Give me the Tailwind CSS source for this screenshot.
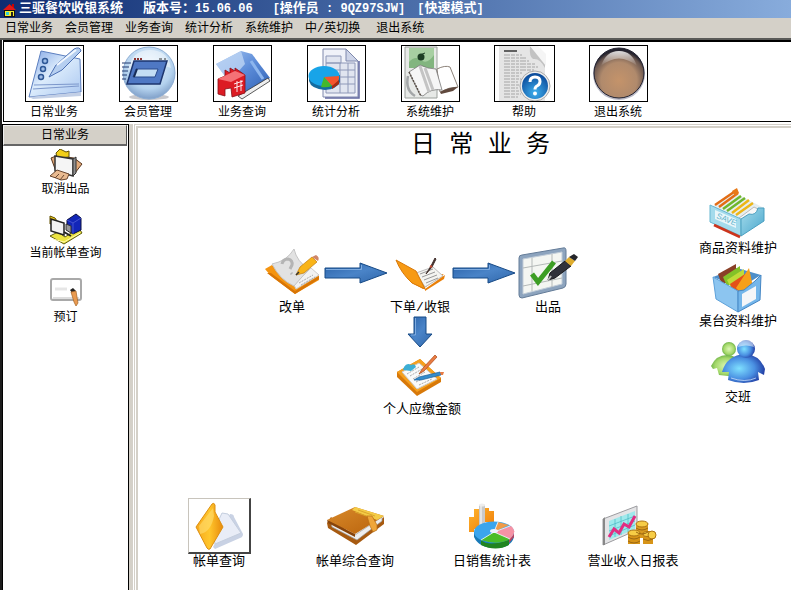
<!DOCTYPE html>
<html lang="zh-CN">
<head>
  <meta charset="UTF-8">
  <title>三驱餐饮收银系统</title>
  <script src="https://cdn.jsdelivr.net/npm/@tailwindcss/browser@4"></script>
</head>
<body class="min-h-screen flex flex-col bg-white text-black text-xs leading-4 font-['Liberation_Mono','Noto_Sans_CJK_SC',monospace] pb-[15px]">

  <!-- Shared gradients -->
  <svg class="absolute" width="0" height="0" aria-hidden="true">
    <defs>
      <linearGradient id="paleBlue" x1="0" y1="0" x2="1" y2="1"><stop offset="0" stop-color="#7fa3e4"/><stop offset=".45" stop-color="#dcecfc"/><stop offset="1" stop-color="#a9c6f0"/></linearGradient>
      <linearGradient id="blue" x1="0" y1="0" x2="1" y2="1"><stop offset="0" stop-color="#a9c8f2"/><stop offset=".5" stop-color="#5b8bd8"/><stop offset="1" stop-color="#2a5cb0"/></linearGradient>
      <linearGradient id="arrow" x1="0" y1="0" x2="1" y2="1"><stop offset="0" stop-color="#2a62a8"/><stop offset=".5" stop-color="#4a84c8"/><stop offset="1" stop-color="#2f66aa"/></linearGradient>
      <linearGradient id="gray" x1="0" y1="0" x2="1" y2="1"><stop offset="0" stop-color="#fafafa"/><stop offset="1" stop-color="#c4c6c8"/></linearGradient>
      <linearGradient id="orange" x1="0" y1="0" x2="1" y2="1"><stop offset="0" stop-color="#ffb52e"/><stop offset="1" stop-color="#ee7a06"/></linearGradient>
      <linearGradient id="gold" x1="0" y1="0" x2="1" y2="0"><stop offset="0" stop-color="#f7a81c"/><stop offset=".5" stop-color="#ffc62c"/><stop offset="1" stop-color="#e88a0c"/></linearGradient>
      <linearGradient id="brown" x1="0" y1="0" x2="1" y2="1"><stop offset="0" stop-color="#d98a2a"/><stop offset="1" stop-color="#b8620c"/></linearGradient>
      <linearGradient id="cyan" x1="0" y1="0" x2="1" y2="1"><stop offset="0" stop-color="#a6dcec"/><stop offset="1" stop-color="#48a6cc"/></linearGradient>
      <radialGradient id="sphere" cx=".5" cy=".35" r=".65"><stop offset="0" stop-color="#eef7fe"/><stop offset=".7" stop-color="#b4d2ee"/><stop offset="1" stop-color="#7f9fc8"/></radialGradient>
      <radialGradient id="bronze" cx=".5" cy=".65" r=".6"><stop offset="0" stop-color="#c4936a"/><stop offset=".6" stop-color="#b08a6c"/><stop offset=".88" stop-color="#6c5850"/><stop offset="1" stop-color="#23222e"/></radialGradient>
      <linearGradient id="gloss" x1="0" y1="0" x2="0" y2="1"><stop offset="0" stop-color="#fff" stop-opacity=".85"/><stop offset="1" stop-color="#fff" stop-opacity="0"/></linearGradient>
      <radialGradient id="help" cx=".5" cy=".75" r=".7"><stop offset="0" stop-color="#3fb0ee"/><stop offset="1" stop-color="#0c4c9c"/></radialGradient>
      <radialGradient id="bluePerson" cx=".4" cy=".5" r=".65"><stop offset="0" stop-color="#7fe0ff"/><stop offset=".55" stop-color="#4a90e2"/><stop offset="1" stop-color="#1a2e98"/></radialGradient>
      <radialGradient id="greenPerson" cx=".5" cy=".5" r=".6"><stop offset="0" stop-color="#dcf7b4"/><stop offset=".6" stop-color="#a4d86a"/><stop offset="1" stop-color="#4c9a34"/></radialGradient>
    </defs>
  </svg>

  <!-- Title bar -->
  <header class="flex items-center h-[18px] pl-[3px] bg-linear-to-r from-[#102c72] to-[#88acdc] text-white font-bold whitespace-pre">
    <svg class="mr-[3px] mt-0.5" width="13" height="14" viewBox="0 0 13 14">
      <path d="M1 7L6.500 1 12 7v7H1z" fill="#111"/>
      <path d="M9 1h2v4H9z" fill="#c00"/>
      <path d="M0 7L6.500 1 13 7H0z" fill="#e01818"/>
      <path d="M2 8h9v5H2z" fill="#f4ee30"/>
      <path d="M3 9h3v3H3z" fill="#2cd0d8"/><path d="M8 9h2v4H8z" fill="#222"/>
    </svg>
    <h1 class="text-[13px]">三驱餐饮收银系统</h1>
    <span class="ml-5 text-[13px]">版本号：</span><span>15.06.06</span>
    <span class="ml-5">[</span><span class="text-[13px]">操作员</span><span> : 9QZ97SJW]</span>
    <span class="ml-3">[</span><span class="text-[13px]">快速模式</span><span>]</span>
  </header>

  <!-- Menu -->
  <nav class="flex items-center gap-3 h-[22px] pt-0.5 pl-[5px] bg-[#d4d0c8] border-b-2 border-[#5a5a58]">
    <button>日常业务</button>
    <button>会员管理</button>
    <button>业务查询</button>
    <button>统计分析</button>
    <button>系统维护</button>
    <button>中/英切换</button>
    <button class="ml-1">退出系统</button>
  </nav>

  <div class="flex-1 flex flex-col border-l-2 border-[#1c1c1c]">

    <!-- Toolbar -->
    <div class="flex ml-px pl-[3px] pt-[3px] border-l border-t-2 border-b border-black">
      <button class="w-[94px] flex flex-col items-center gap-[3px]">
        <svg class="border border-black" width="59" height="57" viewBox="0 0 57 55">
          <path d="M15 5L54 13 55 46 3 51z" fill="url(#paleBlue)" stroke="#5c7fc0"/>
          <path d="M7 43l46-3M8 39l45-1" stroke="#7d98cc" fill="none"/>
          <path d="M3 51l52-5v4L7 53z" fill="#c2cfe6"/>
          <g fill="#9fbde8" stroke="#2e5796" stroke-width="1.500"><circle cx="19" cy="15" r="2.500"/><circle cx="17" cy="23" r="2.500"/><circle cx="15" cy="31" r="2.500"/></g>
          <path d="M23 31l7-12L48 3q6-3 7 2L36 24z" fill="#b6cff0" stroke="#4d70b4"/>
          <path d="M31 19L50 4" stroke="#f2f8ff" stroke-width="2"/>
        </svg>
        日常业务
      </button>
      <button class="w-[94px] flex flex-col items-center gap-[3px]">
        <svg class="border border-black" width="59" height="57" viewBox="0 0 57 55">
          <ellipse cx="29" cy="51" rx="20" ry="3" fill="#c8c8cc"/>
          <circle cx="29" cy="27" r="26" fill="url(#sphere)" stroke="#8eaed4"/>
          <path d="M8 24q4-20 22-20t21 18q-20-8-43 2z" fill="#fff" opacity=".45"/>
          <path d="M14 15h33L40 38H7z" fill="#4f78c4" stroke="#1d356e" stroke-width="1.500"/>
          <path d="M16 23h22l-3 8H13z" fill="#c4ddf4" stroke="#2b4a8c"/>
          <path d="M17 23l-3 8" stroke="#152a55" stroke-width="2"/>
          <path d="M14 13h9" stroke="#883232" stroke-width="2" stroke-dasharray="2 1"/><path d="M39 13h7" stroke="#333" stroke-dasharray="3 2"/>
          <path d="M2 17h9M2 21h7M2 25h6M2 29h5M2 33h4" stroke="#223a70"/>
        </svg>
        会员管理
      </button>
      <button class="w-[94px] flex flex-col items-center gap-[3px]">
        <svg class="border border-black" width="59" height="57" viewBox="0 0 57 55">
          <path d="M2 18L27 5l11 3 18 24-30 18z" fill="url(#blue)"/>
          <path d="M2 18L27 5l4 13-16 18z" fill="#bdd5f4" opacity=".8"/>
          <path d="M24 50L54 32l2 3-28 18z" fill="#eee" stroke="#333" stroke-width=".8"/>
          <path d="M37 15l12 18" stroke="#8db6ee" stroke-width="3"/>
          <path d="M4 33l7-3v-6l5 3v-5l5 3v-3l10 7v18l-13 4-1-9-6 1v7l-7-2z" fill="#dc1c24" stroke="#861016" stroke-width=".8"/>
          <path d="M4 33l13 3 14-7-10-4z" fill="#f47276"/>
          <path d="M20 38l9-3M20 42l9-3M23 35v11M27 34v11" stroke="#fff" stroke-width=".9"/>
        </svg>
        业务查询
      </button>
      <button class="w-[94px] flex flex-col items-center gap-[3px]">
        <svg class="border border-black" width="59" height="57" viewBox="0 0 57 55">
          <path d="M15 3h23l12 12v36H15z" fill="#f0f2f9" stroke="#7e88ac"/>
          <path d="M51 15v37H17" stroke="#6268a0" stroke-width="1.500" fill="none"/>
          <path d="M38 3v12h12z" fill="#cdd4e8" stroke="#7e88ac"/>
          <path d="M18 10h15v7H18zM18 17h29v30H18z" fill="#e1e5f0" stroke="#8e98b8"/>
          <path d="M18 24h29M18 31h29M18 38h29M32 17v30M40 17v30" stroke="#8e98b8" fill="none"/>
          <path d="M1 29v6q2 8 16 9 12-1 15-8v-7z" fill="#146ca0"/>
          <ellipse cx="16" cy="30" rx="15.500" ry="10" fill="#18a4e8"/>
          <path d="M16 31l15-1q1 6-7 10z" fill="#f4552c"/><path d="M24 40l7-6v4l-7 5z" fill="#a82c12"/>
          <path d="M16 31l8 9q-5 2-11 1z" fill="#42b82c"/>
        </svg>
        统计分析
      </button>
      <button class="w-[94px] flex flex-col items-center gap-[3px]">
        <svg class="border border-black" width="59" height="57" viewBox="0 0 57 55">
          <path d="M3 1h32v51H3z" fill="#e7e9e7" stroke="#9ba09c"/>
          <path d="M7 2h25v20H7z" fill="#a7cfa2"/><path d="M7 16q6-7 12-2t13-5v13H7z" fill="#82b57f"/>
          <circle cx="19" cy="11" r="3.500" fill="#1c3e24"/><path d="M18 9l5-2" stroke="#1c3e24"/>
          <path d="M6 30q-3 14 7 20" fill="none" stroke="#a3a6a8" stroke-width="2.500"/>
          <path d="M35 23q8-4 13-2l8 20q-9 0-18 5z" fill="#fff" stroke="#8c8279"/>
          <path d="M38 46q9-5 18-5l-5 4-12 3z" fill="#60493e"/>
          <path d="M7 26l11-7q8 4 16 4l6 21q-11-2-19 6l-3-1z" fill="#f6f6f6" stroke="#777" stroke-width=".8"/>
          <path d="M7 26l12 24" stroke="#5a5048" stroke-width="1.500" stroke-dasharray="2 1"/>
          <path d="M18 20l9 26M23 22l8 22" stroke="#c4c4c4" stroke-width="3"/>
        </svg>
        系统维护
      </button>
      <button class="w-[94px] flex flex-col items-center gap-[3px]">
        <svg class="border border-black" width="61" height="57" viewBox="0 0 59 55">
          <path d="M4 0h31l15 14v41H4z" fill="#e5e5e5"/>
          <path d="M35 0q-1 11 3 13 7-1 12 9V14z" fill="#c2c2c2"/><path d="M35 0l16 20V8L43 0z" fill="#f5f5f5"/>
          <path d="M9 5h13" stroke="#333" stroke-width="1.500"/>
          <path d="M9 9h18M9 12h22M9 15h25M9 18h32M9 21h34M9 24h30M9 27h18M9 30h15M9 33h17M9 36h14M9 39h16M9 42h14M9 45h16M9 48h17M9 51h14" stroke="#a5a5a5" stroke-dasharray="6 1 4 1 3 1"/>
          <circle cx="40" cy="40" r="15" fill="#eee" stroke="#aaa"/>
          <circle cx="40" cy="40" r="13" fill="url(#help)"/>
          <path d="M35 36q0-5 5-5t5 4.500q0 3-3 4.500-2 1-2 3.500" fill="none" stroke="#fff" stroke-width="3"/><circle cx="40" cy="47.500" r="2" fill="#fff"/>
        </svg>
        帮助
      </button>
      <button class="w-[94px] flex flex-col items-center gap-[3px]">
        <svg class="border border-black" width="59" height="57" viewBox="0 0 57 55">
          <circle cx="29" cy="28" r="26" fill="#b9b9c6"/>
          <circle cx="29" cy="27" r="25" fill="url(#bronze)" stroke="#222230"/>
          <path d="M11 20Q16 5 29 5t18 15Q29 5 11 20z" fill="url(#gloss)"/>
        </svg>
        退出系统
      </button>
    </div>

    <div class="flex-1 flex mt-0.5">

      <!-- Sidebar -->
      <aside class="w-[127px] shrink-0 flex flex-col border-t border-x border-black">
        <button class="h-[21px] mr-px mb-[3px] pt-px bg-[#d4d0c8] border border-b-2 border-t-[#eee] border-l-[#eee] border-r-[#555] border-b-[#666]">日常业务</button>
        <button class="h-16 flex flex-col items-center gap-px">
          <svg width="34" height="32" viewBox="0 0 34 32">
            <path d="M2 9l5-2 18 2 8 6-7 9-18 1z" fill="#e0a878" stroke="#58351e"/>
            <path d="M7 4l4-4 6 3 3-1v6L8 9z" fill="#f2cf18" stroke="#635000"/>
            <path d="M6 7l18 3v17L6 22z" fill="#f5f5f5" stroke="#333" stroke-width="1.500"/>
            <path d="M24 10l3-2v16l-3 3z" fill="#8e8e8e" stroke="#333"/>
            <path d="M1 27l7-6 12 4-2 5-6 1-5-2z" fill="#e9ba90" stroke="#69462f"/>
            <path d="M6 29l4-4M11 31l4-5" stroke="#69462f"/>
          </svg>
          取消出品
        </button>
        <button class="h-16 flex flex-col items-center gap-px">
          <svg width="34" height="32" viewBox="0 0 34 32">
            <path d="M1 23l8-4 7 5 14-9 3 5-18 11z" fill="#ece442" stroke="#5f5a10"/>
            <path d="M4 26l11 3 16-9" stroke="#fff9b0" fill="none"/>
            <path d="M1 3l5 2 2 3-7 3z" fill="#f2cf18" stroke="#635000"/>
            <path d="M2 6l13 4v12L2 18z" fill="#f3f3f3" stroke="#222" stroke-width="1.500"/>
            <path d="M18 7l9-6 5 4v12l-8 4-6-4z" fill="#1226b8" stroke="#0a0f40"/>
            <path d="M18 7l6 3 8-5M24 10v11" stroke="#4253d0" fill="none"/><path d="M17 11l5 2v7l-5-3z" fill="#999" stroke="#333"/>
            <path d="M15 19l7 4" stroke="#222" stroke-width="2"/>
          </svg>
          当前帐单查询
        </button>
        <button class="h-16 flex flex-col items-center gap-px">
          <svg width="34" height="32" viewBox="0 0 34 32">
            <rect x="2" y="2" width="30" height="21" rx="2" fill="#fff" stroke="#a9a9a9" stroke-width="2"/>
            <path d="M4 21h26" stroke="#ddd" stroke-width="2"/><path d="M6 12h12" stroke="#e6e6e6" stroke-width="3"/>
            <path d="M21 13l3-2 3 3-4 2z" fill="#222"/>
            <path d="M22 15l5-1 2 12-2 3-2-4z" fill="#e99a50" stroke="#a26326" stroke-width=".7"/>
          </svg>
          预订
        </button>
      </aside>

      <div class="w-1 shrink-0 bg-[#d4d0c8]"></div>

      <!-- Main area -->
      <div class="flex-1 flex ml-px pl-px pt-px border-l border-t border-[#d4d0c8]">
        <main class="flex-1 flex flex-col border-l-2 border-t-2 border-[#d4d0c8] text-[13px]">
          <h2 class="pl-8 text-center text-2xl leading-9 font-normal">日 常 业 务</h2>

          <div class="flex justify-between">
            <!-- Workflow -->
            <section class="grid grid-cols-[repeat(5,64px)] ml-[122px] pt-[81px] content-start">
              <button class="flex flex-col items-center gap-px whitespace-nowrap">
                <svg width="58" height="54" viewBox="0 0 58 54">
                  <path d="M2 24l7-4 25 20 20-11 2 1v5L32 49 8 31z" fill="#f49410"/>
                  <path d="M4 28l28 21 24-15v-3L32 46 8 28z" fill="#d87506"/>
                  <path d="M31 40L48 23l8 7-23 14z" fill="#f2f2f2" stroke="#ccc"/>
                  <path d="M9 19Q24 16 31 4q3 13 15 20L31 41Q17 35 9 19z" fill="#e2e2e2" stroke="#c4c4c4"/>
                  <path d="M19 19q1-5 6-5 5 1 4 6l-2 4M28 28l1 1" stroke="#b4b4b4" stroke-width="3" fill="none"/>
                  <path d="M36 38l14-8M38 40l14-8" stroke="#aaa" stroke-dasharray="2 1"/>
                  <path d="M33 30l4-8 12-10 5 5-13 11z" fill="#f9b418" stroke="#c07b0e" stroke-width=".7"/>
                  <path d="M49 12l4-2q4 2 2 6z" fill="#cf8669"/><path d="M33 30l3-3" stroke="#333" stroke-width="1.500"/>
                </svg>
                改单
              </button>
              <svg class="mt-[17px]" width="64" height="22" viewBox="0 0 64 22">
                <path d="M1 6h35V1l27 10-27 10v-5H1z" fill="url(#arrow)" stroke="#174a86"/>
                <path d="M2 7.500h35.500V3" stroke="#7eabdf" fill="none"/>
              </svg>
              <button class="flex flex-col items-center gap-px whitespace-nowrap">
                <svg width="58" height="54" viewBox="0 0 58 54">
                  <path d="M5 15l23 16 25-2-21 15L21 38z" fill="url(#orange)"/>
                  <path d="M25 28l17-6 10 9-18 11z" fill="#f4f4f0" stroke="#bbb"/>
                  <path d="M29 29l13-5M31 32l13-5M33 35l13-5M35 38l12-5" stroke="#999"/>
                  <path d="M5 15l20 11 9 18-13-6Q10 28 5 15z" fill="#f79a14" stroke="#d8790a"/>
                  <path d="M34 44l17-12 3-2-1 4-19 12z" fill="#e97f08"/>
                  <path d="M35 29l5-8 4-8 1 1-4 8z" fill="#42302c" stroke="#42302c"/><path d="M39 21l2 1" stroke="#cb4d34" stroke-width="2"/>
                </svg>
                下单/收银
              </button>
              <svg class="mt-[17px]" width="64" height="22" viewBox="0 0 64 22">
                <path d="M1 6h35V1l27 10-27 10v-5H1z" fill="url(#arrow)" stroke="#174a86"/>
                <path d="M2 7.500h35.500V3" stroke="#7eabdf" fill="none"/>
              </svg>
              <button class="flex flex-col items-center gap-px whitespace-nowrap">
                <svg width="60" height="54" viewBox="0 0 60 54">
                  <path d="M1 13q0-3 3-3L45 3q3-1 3 3v33q0 3-3 4L4 53q-3 0-3-3z" fill="#8da4be" stroke="#647c98"/>
                  <path d="M5 14l39-7v32L5 49z" fill="#f4f6f2" stroke="#c2cdd8"/>
                  <path d="M5 23l39-7M5 41l39-8M14 13v33M34 9v33" stroke="#b4b9b8"/>
                  <path d="M14 29l6 8 16-20" fill="none" stroke="#3d9e24" stroke-width="5"/>
                  <path d="M30 35l2-7 15-12 6 5-16 12z" fill="#30323a" stroke="#17171b"/>
                  <path d="M47 16l4-4 6 4-4 5z" fill="#deac2d"/><path d="M51 12l5-3 4 3-3 4z" fill="#24252a"/>
                  <path d="M30 35l3-4" stroke="#bbb" stroke-width="2"/>
                </svg>
                出品
              </button>

              <div class="col-start-3 flex flex-col items-center whitespace-nowrap">
                <svg width="26" height="32" viewBox="0 0 26 32">
                  <path d="M7 1h12v17h6L13 31 1 18h6z" fill="url(#arrow)" stroke="#174a86"/>
                  <path d="M8.500 2v17H4" stroke="#7eabdf" fill="none"/>
                </svg>
                <button class="mt-1 ml-1 flex flex-col items-center">
                  <svg width="52" height="50" viewBox="0 0 52 50">
                    <path d="M1 20L24 7l21 19v4L21 44 1 25z" fill="#d87909"/>
                    <path d="M1 20L24 7l21 19-24 14z" fill="#f6a01e"/>
                    <path d="M6 20L23 11l18 16-20 10z" fill="#fafafa" stroke="#ccc"/>
                    <path d="M11 22l12-7M14 24l12-7M17 27l12-7M20 30l14-7M23 33l13-6" stroke="#aaa" stroke-dasharray="2 1"/>
                    <path d="M8 15q3-5 7-2 4-2 5 2l-5 4-8-1z" fill="#3daed4"/>
                    <path d="M23 22l4-6 12-13 2 2-13 14z" fill="#e97b42" stroke="#a94816" stroke-width=".7"/>
                    <path d="M18 28l5-3 21-5 1 3-20 5z" fill="#348ccc" stroke="#1e5f99" stroke-width=".7"/><path d="M44 20l4 0-1 3-2 0z" fill="#e97b42"/>
                  </svg>
                  个人应缴金额
                </button>
              </div>
            </section>

            <!-- Maintenance -->
            <section class="flex flex-col items-center w-[106px] pt-6">
              <button class="flex flex-col items-center gap-px">
                <svg width="60" height="52" viewBox="0 0 60 52">
                  <path d="M5 18l20-14 31 16-27 20z" fill="#e6eef0"/>
                  <path d="M7 17L26 4M11 19L30 5" stroke="#e36d15" stroke-width="2.500"/><path d="M24 3l5-3 2 5-4 3z" fill="#e87918"/>
                  <path d="M15 21L33 8M19 23L37 10" stroke="#70b62c" stroke-width="2.500"/>
                  <path d="M24 25L41 12M28 27L45 15" stroke="#edb616" stroke-width="2.500"/>
                  <path d="M31 30l15-11 8 4-20 15z" fill="#f8f8f8" stroke="#bbb"/>
                  <path d="M2 17l31 14v17L2 34z" fill="#a4dbec" stroke="#67b6d0"/>
                  <path d="M33 31l8-5q7 2 9-6l6 0v13L33 48z" fill="url(#cyan)" stroke="#4a9fc0"/>
                  <path d="M7 22l21 9v9L7 31z" fill="#e9f6fa"/>
                  <text x="8" y="30" transform="rotate(22 8 30)" font-size="8" font-family="Liberation Sans" fill="#5fb4cc">SAVE</text>
                  <path d="M6 37l26 12" stroke="#cc341c" stroke-width="2.500"/>
                </svg>
                商品资料维护
              </button>
              <button class="mt-1.5 flex flex-col items-center gap-px">
                <svg width="54" height="50" viewBox="0 0 54 50">
                  <path d="M2 14l24-9 24 7-21 13z" fill="#4e8fca"/>
                  <path d="M7 11L25 1v13L11 22z" fill="#8a4028"/>
                  <path d="M12 14L29 3v14L16 23z" fill="#83c228"/><path d="M16 17L33 6v14l-13 5z" fill="#bfdc38"/>
                  <path d="M19 21L37 9v16l-14 5z" fill="#e3501a"/><path d="M25 25L38 5l4 19-12 6z" fill="#f6a01a"/>
                  <path d="M2 14l25 14v21L5 36z" fill="#8cc5f0" stroke="#5da1da"/>
                  <path d="M27 28l6-1 11-9 6-6-1 25-22 12z" fill="#74b6ea" stroke="#4586c4"/>
                  <path d="M31 31l14-8v13l-14 8z" fill="#f5f6f8"/>
                </svg>
                桌台资料维护
              </button>
              <button class="mt-[9px] flex flex-col items-center gap-px">
                <svg width="58" height="50" viewBox="0 0 58 50">
                  <path d="M2 27q5-11 16-11t14 12l-4 10-18-2-2-7-4 1z" fill="url(#greenPerson)"/>
                  <circle cx="20" cy="10" r="7" fill="url(#greenPerson)"/>
                  <path d="M13 33q5-17 23-18 15 1 20 15l-1 6-6-3 1 8q-15 6-31 0l1-8z" fill="url(#bluePerson)"/>
                  <circle cx="37" cy="10" r="9" fill="url(#bluePerson)"/>
                  <path d="M29 8q1-7 8-7t8 7q-8-3-16 0z" fill="#fff" opacity=".5"/>
                  <path d="M22 39q14 5 25 0" stroke="#dceaff" fill="none" opacity=".7"/>
                </svg>
                交班
              </button>
            </section>
          </div>

          <!-- Reports -->
          <section class="grid grid-cols-[136px_136px_138px_144px] pl-[13px] mt-[80px]">
            <button class="flex flex-col items-center">
              <svg class="border border-t-[#c8c4bc] border-l-[#c8c4bc] border-r-2 border-b-2 border-r-[#444] border-b-[#444]" width="63" height="56" viewBox="0 0 60 53">
                <path d="M24 48l17-33q4 0 4 3l9 17q0 3-3 4L26 50z" fill="#c9d2e4"/>
                <path d="M24 33l9-19 6 1 13 19-26 11z" fill="#e9edf7" stroke="#c4cede"/>
                <path d="M7 28L23 5q2-2 3 1v7l8 15-13 22q-2 1-3-1z" fill="url(#gold)" stroke="#dc8f12"/>
                <path d="M10 27L24 9l1 8q-3 16-14 18z" fill="#ffde72" opacity=".6"/>
              </svg>
              帐单查询
            </button>
            <button class="flex flex-col items-center">
              <svg width="62" height="56" viewBox="0 0 62 56">
                <path d="M3 25l4-6 26 22 27-22v7L32 47 4 30z" fill="#a75a10"/>
                <path d="M7 25l24 12 27-18v4L33 42 8 29z" fill="#eeeeee" stroke="#999" stroke-width=".7"/>
                <path d="M3 22L31 9l29 9-29 18z" fill="url(#brown)"/>
                <path d="M31 9l29 9-7 4-25-10z" fill="#f4cb46"/><path d="M34 12l17 6M31 14l17 6" stroke="#dba62b"/>
                <path d="M3 22l28 14v3L4 25z" fill="#86430a"/>
                <path d="M43 18l5 0 5 9v5l-4 2-3-6z" fill="#efa63a" stroke="#b76d14" stroke-width=".7"/>
              </svg>
              帐单综合查询
            </button>
            <button class="flex flex-col items-center">
              <svg width="50" height="56" viewBox="0 0 50 56">
                <path d="M2 19h5v15H2zM7 11h5v20H7zM18 10h4v14h-4zM22 13h5v14h-5z" fill="url(#orange)"/>
                <path d="M12 7h6v25h-6z" fill="#c9c9c9"/><path d="M14 7v22" stroke="#fff"/><ellipse cx="15" cy="7" rx="3" ry="1.500" fill="#eee"/>
                <path d="M7 34v5q5 11 21 11t19-11v-5z" fill="#187ab8"/>
                <path d="M14 42q7 7 28 0v5q-13 7-28 0z" fill="#218420"/><path d="M42 41l5-7v5l-5 6z" fill="#b8425f"/>
                <ellipse cx="27" cy="34" rx="20" ry="10.500" fill="#3ba5ed"/>
                <path d="M27 34l17-6q7 5-1 13z" fill="#f593a5"/><path d="M27 34l4-10 11 3z" fill="#ef9b49"/>
                <path d="M27 34l16 7q-12 7-29 1z" fill="#4abc28"/>
                <path d="M27 34l4-10M27 34l16-6M27 34l16 7M27 34l-13 8" stroke="#fff" stroke-width=".8"/><ellipse cx="27" cy="33" rx="4" ry="2" fill="#edf3ff"/>
              </svg>
              日销售统计表
            </button>
            <button class="flex flex-col items-center">
              <svg width="62" height="56" viewBox="0 0 62 56">
                <path d="M1 21L35 8v24L1 47z" fill="#e4e4e6" stroke="#9b9b9f"/><path d="M1 21l2-2v28H1z" fill="#888"/>
                <path d="M7 23l26-10v18L7 42z" fill="#9fe9ec"/>
                <path d="M7 28l26-10M7 33l26-10M7 38l26-11M13 21v18M19 18v19M26 16v18" stroke="#51bcc6" stroke-width=".8"/>
                <path d="M7 39l5-8 5 4 5-9 5 3 6-11" fill="none" stroke="#e12d82" stroke-width="3"/>
                <path d="M34 25v15h12V25z" fill="#d99a20"/><path d="M26 34v12h12V34zM41 36v10h10V36z" fill="#d79418"/>
                <g fill="#f7cd46" stroke="#ad7412"><ellipse cx="40" cy="26" rx="6" ry="3"/><ellipse cx="32" cy="35" rx="6" ry="3"/><ellipse cx="46" cy="36" rx="5" ry="2.500"/><circle cx="50" cy="37" r="4"/></g>
                <path d="M34 30q6 4 12 0M34 34q6 4 12 0M26 39q6 4 12 0M26 43q6 4 12 0M41 41q5 3 10 0" stroke="#9c6811" fill="none"/>
              </svg>
              营业收入日报表
            </button>
          </section>
        </main>
      </div>
    </div>
  </div>

</body>
</html>
